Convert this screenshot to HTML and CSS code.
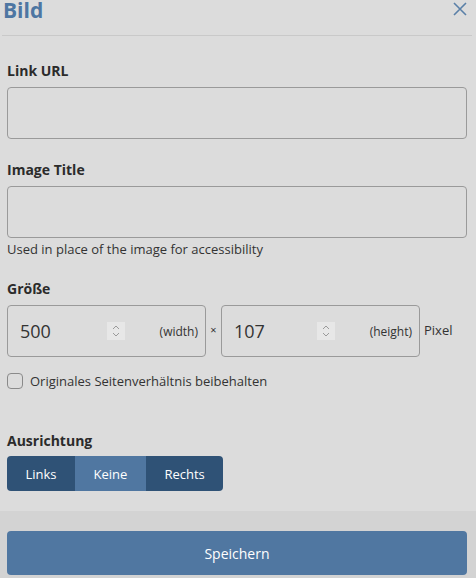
FILE: index.html
```html
<!DOCTYPE html>
<html lang="de">
<head>
<meta charset="utf-8">
<title>Bild</title>
<link rel="stylesheet" href="styles.css">
</head>
<body>
<div class="dialog">
  <div class="header">
    <h1 class="title">Bild</h1>
    <button class="close" aria-label="Schließen">
      <svg width="14" height="14" viewBox="0 0 14 14"><path d="M1 1L13 13M13 1L1 13" stroke="#5a80a8" stroke-width="1.6" fill="none"/></svg>
    </button>
  </div>
  <div class="content">
    <div class="field first">
      <label class="label">Link URL</label>
      <input class="text-input" type="text">
    </div>
    <div class="field">
      <label class="label">Image Title</label>
      <input class="text-input" type="text">
      <div class="help">Used in place of the image for accessibility</div>
    </div>
    <div class="field">
      <label class="label">Größe</label>
      <div class="size-row">
        <div class="num-box">
          <input class="num-input" type="text" value="500">
          <span class="spinner"><svg width="18" height="18" viewBox="0 0 18 18"><path d="M6 7L9 4L12 7M6 11L9 14L12 11" stroke="#9a9a9a" stroke-width="1" fill="none"/></svg></span>
          <span class="unit">(width)</span>
        </div>
        <span class="times">×</span>
        <div class="num-box">
          <input class="num-input" type="text" value="107">
          <span class="spinner"><svg width="18" height="18" viewBox="0 0 18 18"><path d="M6 7L9 4L12 7M6 11L9 14L12 11" stroke="#9a9a9a" stroke-width="1" fill="none"/></svg></span>
          <span class="unit">(height)</span>
        </div>
        <span class="pixel">Pixel</span>
      </div>
      <label class="check-row">
        <span class="checkbox"></span>
        <span class="check-label">Originales Seitenverhältnis beibehalten</span>
      </label>
    </div>
    <div class="field align-field">
      <label class="label">Ausrichtung</label>
      <div class="btn-group">
        <button class="seg">Links</button>
        <button class="seg active">Keine</button>
        <button class="seg">Rechts</button>
      </div>
    </div>
  </div>
  <div class="footer">
    <button class="save">Speichern</button>
  </div>
</div>
</body>
</html>
```
FILE: styles.css
```css
html, body {
  margin: 0;
  padding: 0;
  background: #dcdcdc;
}
body {
  font-family: "Open Sans", "Noto Sans", sans-serif;
  color: #333;
}
.header {
  display: flex;
  justify-content: space-between;
  align-items: flex-start;
  height: 35px;
  margin: 0 4px 0 2px;
  border-bottom: 1px solid #c9c9c9;
}
.title {
  margin: 0;
  padding-left: 1px;
  font-size: 21px;
  line-height: 20px;
  font-weight: 700;
  color: #4e76a2;
}
.close {
  margin: 2px 5px 0 0;
  padding: 0;
  border: none;
  background: none;
  width: 14px;
  height: 14px;
  display: flex;
}
.content {
  padding: 25px 9px 20px 7px;
}
.field {
  margin-top: 21px;
}
.field.first {
  margin-top: 0;
}
.label {
  display: block;
  font-size: 14px;
  line-height: 20px;
  font-weight: 700;
  color: #2b2b2b;
  margin-bottom: 6px;
}
.text-input {
  display: block;
  box-sizing: border-box;
  width: 100%;
  height: 52px;
  margin: 0;
  border: 1px solid #9a9a9a;
  border-radius: 4px;
  background: transparent;
  font-family: inherit;
  font-size: 16px;
  padding: 0 12px;
}
.help {
  margin-top: 2px;
  font-size: 13px;
  line-height: 18px;
  color: #333;
}
.size-row {
  display: flex;
  align-items: center;
}
.num-box {
  box-sizing: border-box;
  width: 199px;
  height: 52px;
  display: flex;
  align-items: center;
  border: 1px solid #9a9a9a;
  border-radius: 4px;
  padding: 0 7px 0 12px;
}
.num-input {
  flex: 1;
  min-width: 0;
  border: none;
  background: transparent;
  padding: 0;
  margin: 0;
  font-family: inherit;
  font-size: 18px;
  color: #333;
  outline: none;
}
.spinner {
  width: 18px;
  height: 18px;
  background: #e7e7e7;
  display: flex;
}
.unit {
  margin-left: 35px;
  font-size: 12px;
  color: #333;
}
.times {
  width: 15px;
  text-align: center;
  font-size: 11px;
  color: #333;
  margin-bottom: 4px;
}
.pixel {
  margin-left: 4px;
  font-size: 13px;
  color: #333;
  margin-bottom: 2px;
}
.check-row {
  display: flex;
  align-items: center;
  margin-top: 16px;
  height: 16px;
}
.checkbox {
  box-sizing: border-box;
  width: 16px;
  height: 16px;
  border: 1px solid #8a8a8a;
  border-radius: 4px;
}
.check-label {
  margin-left: 7px;
  font-size: 13px;
  color: #333;
}
.align-field {
  margin-top: 42px;
}
.align-field .label {
  margin-bottom: 5px;
}
.btn-group {
  display: inline-flex;
  border-radius: 4px;
  overflow: hidden;
}
.seg {
  height: 35px;
  padding: 0 18.5px;
  border: none;
  margin: 0;
  background: #2f5276;
  color: #fff;
  font-family: inherit;
  font-size: 13px;
}
.seg.active {
  background: #5077a1;
}
.footer {
  background: #d3d3d3;
  padding: 20px 9px 20px 7px;
}
.save {
  display: block;
  width: 100%;
  height: 44px;
  border: none;
  border-radius: 4px;
  background: #5077a1;
  color: #fff;
  font-family: inherit;
  font-size: 14px;
}
```
